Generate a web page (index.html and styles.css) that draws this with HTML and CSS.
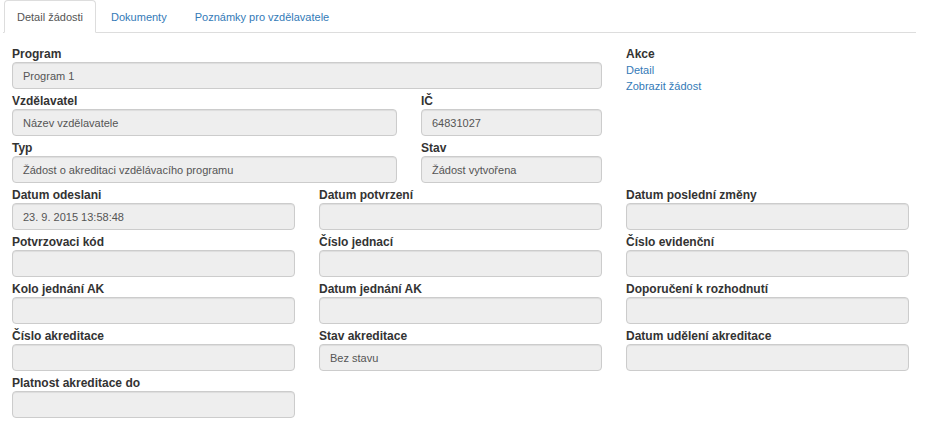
FILE: index.html
```html
<!DOCTYPE html>
<html lang="cs">
<head>
<meta charset="utf-8">
<title>Detail žádosti</title>
<link rel="stylesheet" href="styles.css">
</head>
<body>
<ul class="tabs">
  <li class="tab active"><a href="#">Detail žádosti</a></li>
  <li class="tab"><a href="#">Dokumenty</a></li>
  <li class="tab"><a href="#">Poznámky pro vzdělavatele</a></li>
</ul>
<div class="content">
  <div class="top">
    <div class="main">
      <div class="field">
        <label>Program</label>
        <div class="input">Program 1</div>
      </div>
      <div class="pair">
        <div class="field">
          <label>Vzdělavatel</label>
          <div class="input">Název vzdělavatele</div>
        </div>
        <div class="field">
          <label>IČ</label>
          <div class="input">64831027</div>
        </div>
      </div>
      <div class="pair">
        <div class="field">
          <label>Typ</label>
          <div class="input">Žádost o akreditaci vzdělávacího programu</div>
        </div>
        <div class="field">
          <label>Stav</label>
          <div class="input">Žádost vytvořena</div>
        </div>
      </div>
    </div>
    <div class="actions">
      <label>Akce</label>
      <a href="#" class="link">Detail</a>
      <a href="#" class="link">Zobrazit žádost</a>
    </div>
  </div>
  <div class="grid">
    <div class="field"><label>Datum odeslani</label><div class="input">23. 9. 2015 13:58:48</div></div>
    <div class="field"><label>Datum potvrzení</label><div class="input"></div></div>
    <div class="field"><label>Datum poslední změny</label><div class="input"></div></div>
    <div class="field"><label>Potvrzovaci kód</label><div class="input"></div></div>
    <div class="field"><label>Číslo jednací</label><div class="input"></div></div>
    <div class="field"><label>Číslo evidenční</label><div class="input"></div></div>
    <div class="field"><label>Kolo jednání AK</label><div class="input"></div></div>
    <div class="field"><label>Datum jednání AK</label><div class="input"></div></div>
    <div class="field"><label>Doporučení k rozhodnutí</label><div class="input"></div></div>
    <div class="field"><label>Číslo akreditace</label><div class="input"></div></div>
    <div class="field"><label>Stav akreditace</label><div class="input">Bez stavu</div></div>
    <div class="field"><label>Datum udělení akreditace</label><div class="input"></div></div>
    <div class="field"><label>Platnost akreditace do</label><div class="input"></div></div>
  </div>
</div>
</body>
</html>
```

FILE: styles.css
```css
* { box-sizing: border-box; }
html, body {
  margin: 0;
  padding: 0;
  background: #fff;
}
body {
  font-family: "Liberation Sans", Arial, sans-serif;
  font-size: 11px;
  color: #333;
}
.tabs {
  list-style: none;
  margin: 0 9px 0 3px;
  padding: 0 0 0 1px;
  display: flex;
  border-bottom: 1px solid #ddd;
}
.tab {
  margin-right: 2px;
  margin-bottom: -1px;
}
.tab a {
  display: block;
  padding: 8px 12px 7px 12px;
  line-height: 16px;
  border: 1px solid transparent;
  border-radius: 4px 4px 0 0;
  color: #337ab7;
  text-decoration: none;
}
.tab.active a {
  color: #555;
  background: #fff;
  border-color: #ddd #ddd transparent #ddd;
}
.content {
  padding: 13px 0 0 12px;
}
.top {
  display: grid;
  grid-template-columns: 590px 283px;
  column-gap: 24px;
}
.pair {
  display: grid;
  grid-template-columns: 385px 181px;
  column-gap: 24px;
}
.grid {
  display: grid;
  grid-template-columns: repeat(3, 283px);
  column-gap: 24px;
}
.field {
  margin-bottom: 4px;
}
label {
  display: block;
  font-size: 12px;
  font-weight: bold;
  line-height: 16px;
  color: #333;
}
.input {
  height: 27px;
  padding: 1px 10px 0;
  line-height: 24px;
  background: #eee;
  border: 1px solid #ccc;
  border-radius: 4px;
  box-shadow: inset 0 1px 1px rgba(0,0,0,.075);
  color: #555;
  white-space: nowrap;
  overflow: hidden;
}
.actions {
  display: flex;
  flex-direction: column;
  align-items: flex-start;
}
.link {
  line-height: 16px;
  color: #337ab7;
  text-decoration: none;
}
```
